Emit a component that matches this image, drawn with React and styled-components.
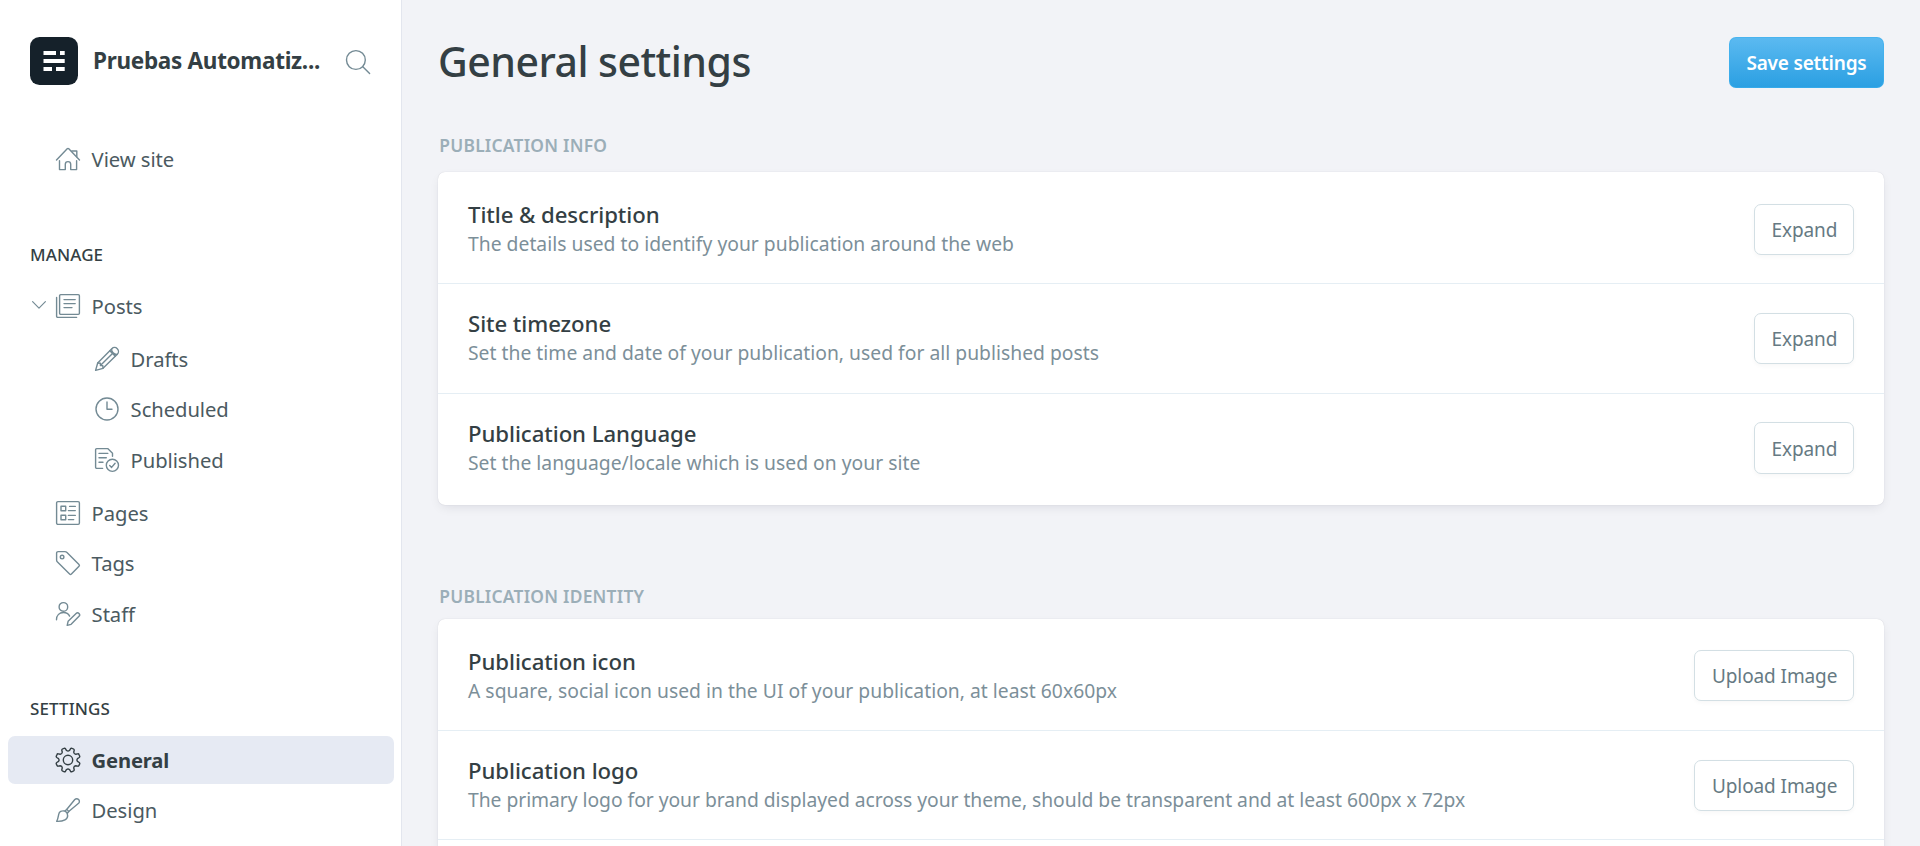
import React from 'react';
import styled, { createGlobalStyle, css } from 'styled-components';

const GlobalStyle = createGlobalStyle`
  *, *::before, *::after { box-sizing: border-box; }
  html, body { margin: 0; height: 100%; overflow: hidden; }
  body {
    font-family: "Noto Sans", "Open Sans", sans-serif;
    color: #343f44;
    background: #f2f3f7;
  }
  h1, h2, h3, p, ul { margin: 0; padding: 0; }
  ul { list-style: none; }
`;

const Shell = styled.div`
  display: flex;
  height: 100vh;
  overflow: hidden;
`;

/* Sidebar */
const Sidebar = styled.nav`
  flex: 0 0 402px;
  background: #fff;
  border-right: 1px solid #e3e6ee;
  padding-top: 37px;
`;

const Brand = styled.header`
  display: flex;
  align-items: center;
  height: 48px;
  padding: 0 31px 0 30px;
  margin-bottom: 50px;
`;

const BrandLogo = styled.svg`
  flex: none;
  width: 48px;
  height: 48px;
`;

const BrandName = styled.div`
  flex: 1;
  margin-left: 15px;
  font-size: 22.5px;
  font-weight: 700;
  line-height: 30px;
  letter-spacing: -0.3px;
  white-space: nowrap;
`;

const Glyph = styled.svg`
  flex: none;
  width: 24px;
  height: 24px;
  overflow: visible;
  fill: none;
  stroke: ${(p) => (p.$dark ? '#343f44' : '#738a94')};
  stroke-width: 1.4;
  stroke-linecap: round;
  stroke-linejoin: round;
`;

const SearchGlyph = styled(Glyph)`
  margin-top: 2px;
`;

const NavList = styled.ul`
  display: flex;
  flex-direction: column;
  gap: 2.6px;
  padding: 0 7px 0 8px;
  margin-bottom: ${(p) => p.$after || 0}px;
`;

const SubList = styled.ul`
  display: flex;
  flex-direction: column;
  gap: 2.5px;
  padding: 2.4px 0 2.2px;
`;

const NavItem = styled.li`
  display: flex;
  align-items: center;
  gap: 11.6px;
  height: 48px;
  padding-left: ${(p) => (p.$nested ? 87 : 48)}px;
  border-radius: 7px;
  font-size: 20.2px;
  line-height: 28px;
  letter-spacing: -0.05px;
  color: #4b5a61;
  ${(p) =>
    p.$active &&
    css`
      background: #e6eaf3;
      color: #343f44;
      font-weight: 700;
      letter-spacing: -0.15px;
    `}
`;

const Chevron = styled(Glyph)`
  width: 14px;
  height: 8px;
  margin-left: -24px;
  margin-right: -1.6px;
  margin-top: -1px;
  stroke-width: 1.15;
`;

const NavHeading = styled.h3`
  padding-left: 30px;
  margin-bottom: ${(p) => p.$gap}px;
  font-size: 17px;
  font-weight: 500;
  line-height: 24px;
  letter-spacing: 0.1px;
  text-transform: uppercase;
`;

/* Main column */
const Main = styled.main`
  flex: 1;
  min-width: 0;
  padding: 37px 36px 0;
`;

const PageHeader = styled.header`
  display: flex;
  align-items: center;
  justify-content: space-between;
  height: 51px;
  margin-bottom: 45.2px;
`;

const PageTitle = styled.h1`
  padding-bottom: 3px;
  font-size: 41px;
  font-weight: 500;
  line-height: 50px;
  letter-spacing: -0.53px;
`;

const buttonBase = css`
  height: 51.2px;
  border-radius: 7px;
  font-family: inherit;
  font-size: 19px;
  letter-spacing: -0.1px;
  white-space: nowrap;
`;

const SaveButton = styled.button`
  ${buttonBase}
  width: 155px;
  padding: 1px 0 0;
  border: 1px solid rgba(62, 176, 239, 0.6);
  background: linear-gradient(#5cbaf1, #2a9fe2) border-box;
  color: #fff;
  font-weight: 600;
  letter-spacing: -0.2px;
`;

const OutlineButton = styled.button`
  ${buttonBase}
  margin-top: 0.3px;
  padding: 1px 15.7px 0 16.6px;
  border: 1px solid #d3dfe4;
  background: #fff;
  box-shadow: 0 2px 4px rgba(0, 0, 0, 0.03);
  color: #667a83;
`;

const Section = styled.section`
  margin-bottom: 79.2px;
`;

const SectionLabel = styled.h2`
  padding-left: 1.3px;
  margin-bottom: ${(p) => p.$gap}px;
  font-size: 17.4px;
  font-weight: 600;
  line-height: 24px;
  letter-spacing: 0.23px;
  text-transform: uppercase;
  color: #9baeb8;
`;

const Card = styled.div`
  padding: 2.9px 0 1.9px;
  border-radius: 7px;
  background: #fff;
  box-shadow: 0 0 1px rgba(20, 20, 50, 0.2), 0 4px 12px -3px rgba(20, 20, 50, 0.11);
`;

const SettingRow = styled.div`
  display: flex;
  align-items: center;
  justify-content: space-between;
  height: 109.4px;
  padding: 0 30px;
  border-bottom: 1px solid #e5eef4;
  &:last-child { border-bottom-color: transparent; }
`;

const SettingTitle = styled.h3`
  font-size: 22.2px;
  font-weight: 500;
  line-height: 30px;
  letter-spacing: -0.07px;
`;

const SettingDesc = styled.p`
  font-size: 19.3px;
  line-height: 28px;
  letter-spacing: ${(p) => (p.$long ? -0.035 : 0.02)}px;
  color: #7c8f99;
`;

const gearPath = (() => {
  const at = (r, deg) => {
    const a = (deg * Math.PI) / 180;
    return `${(12 + r * Math.sin(a)).toFixed(2)} ${(12 - r * Math.cos(a)).toFixed(2)}`;
  };
  let d = '';
  for (let k = 0; k < 8; k += 1) {
    const c = 22.5 + 45 * k;
    d += `${k ? 'L' : 'M'}${at(9.6, c - 14)}L${at(11.5, c - 10)}Q${at(12.5, c - 8)} ${at(12.3, c - 3)}`;
    d += `L${at(12.3, c + 3)}Q${at(12.5, c + 8)} ${at(11.5, c + 10)}L${at(9.6, c + 14)}`;
    d += `Q${at(8.4, c + 22.5)} ${at(9.6, c + 31)}`;
  }
  return `${d}Z`;
})();

const icons = {
  home: (
    <>
      <path d="M.5 13 11.2 1.8a1.1 1.1 0 0 1 1.6 0L23.5 13" />
      <path d="M15.8 4h5v5.8M3.5 13.8v8.8h5.8v-5.3a2.7 2.7 0 0 1 5.4 0v5.3h5.9v-8.8" />
    </>
  ),
  posts: (
    <>
      <rect x="3.6" y=".6" width="19.8" height="19.8" rx="1.1" />
      <path d="M.6 3.4v18.9a1.1 1.1 0 0 0 1.1 1.1h18.9M8 5.6h11.2M8 9.6h11.2M8 13.6h8" />
    </>
  ),
  drafts: (
    <>
      <path d="M.6 23.4 2.7 16 16.8 1.7a3.85 3.85 0 0 1 5.5 5.5L8 21.3Z" />
      <path d="M2.7 16l2.7.2v2.4h2.4l.2 2.7M5.4 18.6 18 6M14.8 3.7l5.5 5.5M16.6 2.2c-.2 2.6 2.4 5.4 5.3 5.3" />
    </>
  ),
  scheduled: (
    <>
      <circle cx="12" cy="12" r="11" />
      <path d="M12 5v7.2h5" />
    </>
  ),
  published: (
    <>
      <path d="M7.6 20.4H1.7A1.1 1.1 0 0 1 .6 19.3V1.7A1.1 1.1 0 0 1 1.7.6h11l4.8 4.6v3M4 5.4h8.8M4 9.8h7.3M4 14.2h4" />
      <circle cx="17.4" cy="17.3" r="6.1" />
      <path d="m14.7 17.5 1.9 1.9 3.5-4.1" />
    </>
  ),
  pages: (
    <>
      <rect x=".6" y=".6" width="22.8" height="22.8" rx="1.3" />
      <path d="M5 5.2h4.7v4.6H5zM5 14.2h4.7v4.6H5zM13.6 5.4h5.7M12.4 9.6h6.9M12.4 14.4h6.9M12.4 18.6h5.3" />
    </>
  ),
  tags: (
    <>
      <path d="M.6 2.1A1.5 1.5 0 0 1 2.1.6h6.8a3 3 0 0 1 2.1.9l12 12a1.3 1.3 0 0 1 0 1.8L15.4 23a1.3 1.3 0 0 1-1.8 0L1.5 11.1A3 3 0 0 1 .6 9Z" />
      <circle cx="6.1" cy="6.1" r="1.8" />
    </>
  ),
  staff: (
    <>
      <circle cx="7.4" cy="4.9" r="4.3" />
      <path d="M.5 17.7c0-4.5 3-7.2 6.9-7.2 2.8 0 5.1 1.3 6.2 3.6" />
      <path d="m11.2 23.4.9-4.1 8-7.9a2 2 0 0 1 2.9 2.9l-7.9 8Z" />
    </>
  ),
  general: (
    <>
      <path d={gearPath} />
      <circle cx="12" cy="12" r="4.7" />
    </>
  ),
  design: (
    <>
      <path d="M10.7 11.5 18.8 1.5a2.65 2.65 0 0 1 3.8 3.8L12.7 13.5" />
      <path d="M10.7 11.5a7 7 0 0 1 2 2l-1.5 2a5 5 0 0 0-2.5-2.5ZM8.7 13c-3-.6-5.5.8-6 3.3C2.2 19 2 21 .7 23.4c3.3.1 6-.2 8.3-1.5 2.5-1.4 3.1-3.7 2.2-6.4" />
    </>
  ),
};

function Icon({ name }) {
  return (
    <Glyph viewBox="0 0 24 24" $dark={name === 'general'}>
      {icons[name]}
    </Glyph>
  );
}

function NavLink({ icon, children, nested, active, expandable }) {
  return (
    <NavItem $nested={nested} $active={active}>
      {expandable && (
        <Chevron viewBox="0 0 14 8">
          <path d="M.6.6 7 7.2 13.4.6" />
        </Chevron>
      )}
      <Icon name={icon} />
      <span>{children}</span>
    </NavItem>
  );
}

function Setting({ title, desc, action }) {
  return (
    <SettingRow>
      <div>
        <SettingTitle>{title}</SettingTitle>
        <SettingDesc $long={desc.length > 90}>{desc}</SettingDesc>
      </div>
      <OutlineButton>{action}</OutlineButton>
    </SettingRow>
  );
}

export default function App() {
  return (
    <>
      <GlobalStyle />
      <Shell>
        <Sidebar>
          <Brand>
            <BrandLogo viewBox="0 0 48 48">
              <rect width="48" height="48" rx="9.5" fill="#15212a" />
              <path
                fill="#fff"
                d="M13.5 14H26v4H13.5zM30 14h4.7v4H30zM13.5 22h21.2v4H13.5zM13.5 30H22v4h-8.5zM26 30h8.7v4H26z"
              />
            </BrandLogo>
            <BrandName>Pruebas Automatiz...</BrandName>
            <SearchGlyph viewBox="0 0 24 24">
              <circle cx="9.9" cy="10" r="9.4" />
              <path d="m16.8 16.8 6.8 6.7" />
            </SearchGlyph>
          </Brand>

          <NavList $after={60.2}>
            <NavLink icon="home">View site</NavLink>
          </NavList>

          <NavHeading $gap={14.8}>Manage</NavHeading>
          <NavList $after={59.4}>
            <NavLink icon="posts" expandable>Posts</NavLink>
            <SubList>
              <NavLink icon="drafts" nested>Drafts</NavLink>
              <NavLink icon="scheduled" nested>Scheduled</NavLink>
              <NavLink icon="published" nested>Published</NavLink>
            </SubList>
            <NavLink icon="pages">Pages</NavLink>
            <NavLink icon="tags">Tags</NavLink>
            <NavLink icon="staff">Staff</NavLink>
          </NavList>

          <NavHeading $gap={14.4}>Settings</NavHeading>
          <NavList>
            <NavLink icon="general" active>General</NavLink>
            <NavLink icon="design">Design</NavLink>
          </NavList>
        </Sidebar>

        <Main>
          <PageHeader>
            <PageTitle>General settings</PageTitle>
            <SaveButton>Save settings</SaveButton>
          </PageHeader>

          <Section>
            <SectionLabel $gap={14.8}>Publication info</SectionLabel>
            <Card>
              <Setting
                title="Title & description"
                desc="The details used to identify your publication around the web"
                action="Expand"
              />
              <Setting
                title="Site timezone"
                desc="Set the time and date of your publication, used for all published posts"
                action="Expand"
              />
              <Setting
                title="Publication Language"
                desc="Set the language/locale which is used on your site"
                action="Expand"
              />
            </Card>
          </Section>

          <Section>
            <SectionLabel $gap={10.4}>Publication identity</SectionLabel>
            <Card>
              <Setting
                title="Publication icon"
                desc="A square, social icon used in the UI of your publication, at least 60x60px"
                action="Upload Image"
              />
              <Setting
                title="Publication logo"
                desc="The primary logo for your brand displayed across your theme, should be transparent and at least 600px x 72px"
                action="Upload Image"
              />
              <SettingRow />
            </Card>
          </Section>
        </Main>
      </Shell>
    </>
  );
}
